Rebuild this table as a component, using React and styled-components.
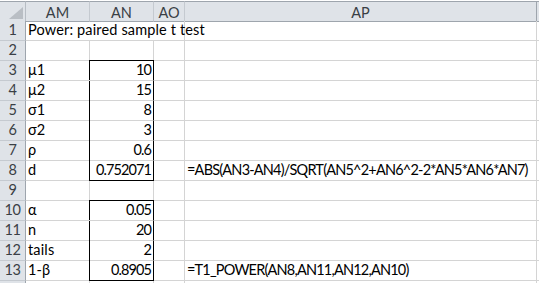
import React from "react"
import styled, { createGlobalStyle } from "styled-components"

const GlobalStyle = createGlobalStyle`
  html, body {
    margin: 0;
    padding: 0;
    background: #ffffff;
  }
  body {
    font-family: Lato, "Liberation Sans", sans-serif;
  }
`

const Sheet = styled.div`
  display: grid;
  grid-template-columns: 26px 64px 64px 31px 352px 1fr;
  grid-auto-rows: 20px;
  width: 539px;
  height: 283px;
  overflow: hidden;
  padding-top: 1px;
  box-sizing: border-box;
  font-size: 14.5px;
  color: #000;
`

const Corner = styled.div`
  height: 21px;
  box-sizing: border-box;
  background: #dfe3e8;
  border-top: 1px solid #9ea5ad;
  border-bottom: 1px solid #9ea5ad;
  border-right: 1px solid #b7bdc4;
  display: flex;
  align-items: flex-end;
  justify-content: flex-end;
  padding: 0 2px 2px 0;
`

const ColHead = styled.div`
  height: 21px;
  box-sizing: border-box;
  background: #dfe3e8;
  border-top: 1px solid #9ea5ad;
  border-bottom: 1px solid #9ea5ad;
  border-right: 1px solid ${p => (p.$last ? "#9ea5ad" : "#c5cad0")};
  color: #3a3f45;
  display: flex;
  align-items: center;
  justify-content: center;
  padding-top: 1px;
`

const RowHead = styled.div`
  box-sizing: border-box;
  background: #dfe3e8;
  border-right: 1px solid #9ea5ad;
  border-bottom: 1px solid #c5cad0;
  color: #3a3f45;
  letter-spacing: -0.4px;
  display: flex;
  align-items: flex-end;
  justify-content: center;
  padding-bottom: 2px;
`

// letter-spacing narrows digits and formulas to the sheet's compact face
const Cell = styled.div`
  box-sizing: border-box;
  border-right: 1px solid ${p => (p.$boxed ? "#000" : "#d4d4d4")};
  border-bottom: 1px solid ${p => (p.$box === "bottom" ? "#000" : "#d4d4d4")};
  grid-column: ${p => (p.$span ? `span ${p.$span}` : "auto")};
  display: flex;
  align-items: flex-end;
  justify-content: ${p => (p.$right ? "flex-end" : "flex-start")};
  padding: 0 ${p => (p.$right ? "2px" : "3px")} 2px 2px;
  white-space: nowrap;
  letter-spacing: ${p => (p.$right ? "-0.9px" : p.$formula ? "-0.8px" : "0.15px")};
  box-shadow: ${p =>
    p.$box === "top"
      ? "-1px -1px 0 #000, 0 -1px 0 #000"
      : p.$boxed
      ? "-1px 0 0 #000"
      : "none"};
`

const columns = ["AM", "AN", "AO", "AP", ""]

const rows = [
  { n: 1, am: "Power: paired sample t test", span: 3 },
  { n: 2 },
  { n: 3, am: "μ1", an: "10", box: "top" },
  { n: 4, am: "μ2", an: "15", box: "mid" },
  { n: 5, am: "σ1", an: "8", box: "mid" },
  { n: 6, am: "σ2", an: "3", box: "mid" },
  { n: 7, am: "ρ", an: "0.6", box: "mid" },
  {
    n: 8,
    am: "d",
    an: "0.752071",
    ap: "=ABS(AN3-AN4)/SQRT(AN5^2+AN6^2-2*AN5*AN6*AN7)",
    box: "bottom",
  },
  { n: 9 },
  { n: 10, am: "α", an: "0.05", box: "top" },
  { n: 11, am: "n", an: "20", box: "mid" },
  { n: 12, am: "tails", an: "2", box: "mid" },
  {
    n: 13,
    am: "1-β",
    an: "0.8905",
    ap: "=T1_POWER(AN8,AN11,AN12,AN10)",
    box: "bottom",
  },
  { n: 14 },
]

const SelectAll = () => (
  <svg width="14" height="12" viewBox="0 0 14 12">
    <polygon points="14,0 14,12 0,12" fill="#b9bec4" />
  </svg>
)

const App = () => {
  return (
    <>
      <GlobalStyle />
      <Sheet>
        <Corner>
          <SelectAll />
        </Corner>
        {columns.map((c, i) => (
          <ColHead key={i} $last={c === "AP"}>
            {c}
          </ColHead>
        ))}
        {rows.map(r => (
          <React.Fragment key={r.n}>
            <RowHead>{r.n}</RowHead>
            {r.span ? (
              <Cell $span={r.span}>{r.am}</Cell>
            ) : (
              <>
                <Cell>{r.am}</Cell>
                <Cell $right $box={r.box} $boxed={!!r.box}>
                  {r.an}
                </Cell>
                <Cell />
              </>
            )}
            <Cell $formula>{r.ap}</Cell>
            <Cell />
          </React.Fragment>
        ))}
      </Sheet>
    </>
  )
}

export default App
